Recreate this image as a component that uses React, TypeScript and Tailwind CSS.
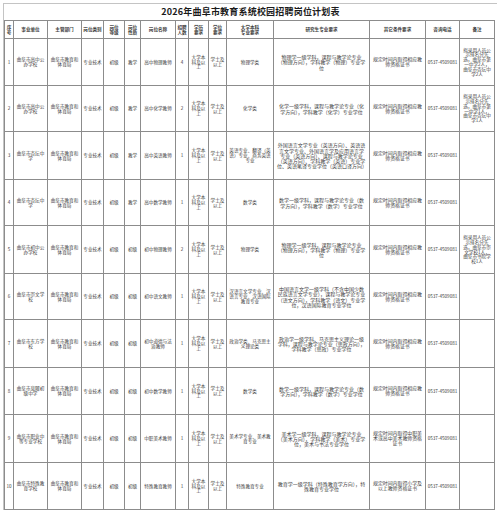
import React from "react";

type Row = {
  no: string;
  unit: string;
  dept: string;
  type: string;
  level: string;
  nature: string;
  name: string;
  num: string;
  edu: string;
  deg: string;
  ug: string;
  pg: string;
  other: string;
  tel: string;
  note: string;
};

const colClasses = [
  "w-[9px]",
  "w-[34px]",
  "w-[34px]",
  "w-[22px]",
  "w-[21px]",
  "w-[16px]",
  "w-[35px]",
  "w-[13px]",
  "w-[20px]",
  "w-[18px]",
  "w-[47px]",
  "w-[96px]",
  "w-[56px]",
  "w-[34px]",
  "w-[35px]",
];

const headers = [
  "序\n号",
  "事业单位",
  "主管部门",
  "岗位类别",
  "岗位\n等级",
  "岗位\n性质",
  "岗位名称",
  "招聘\n人数",
  "学历\n要求",
  "学位\n要求",
  "大学本科\n专业要求",
  "研究生专业要求",
  "其它条件要求",
  "咨询电话",
  "备注",
];

const rowHeights = [
  "h-[47px]",
  "h-[46px]",
  "h-[48px]",
  "h-[46px]",
  "h-[48px]",
  "h-[46px]",
  "h-[48px]",
  "h-[47px]",
  "h-[48px]",
  "h-[47px]",
];

const dept = "曲阜市教育和\n体育局";
const edu = "大学本\n科及以\n上";
const deg = "学士及\n以上";
const tel = "0537-4509081";
const cert = "规定时间内取得相应教\n师资格证书";

const rows: Row[] = [
  {
    no: "1",
    unit: "曲阜市高中公\n办学校",
    dept,
    type: "专业技术",
    level: "初级",
    nature: "教学",
    name: "高中物理教师",
    num: "4",
    edu,
    deg,
    ug: "物理学类",
    pg: "物理学一级学科，课程与教学论专业（物理方向），学科教学（物理）专业学位",
    other: cert,
    tel,
    note: "拟录用人员公\n示排名分先\n选，曲阜市第\n一中学2人，\n曲阜市杏坛中\n学2人",
  },
  {
    no: "2",
    unit: "曲阜市高中公\n办学校",
    dept,
    type: "专业技术",
    level: "初级",
    nature: "教学",
    name: "高中化学教师",
    num: "2",
    edu,
    deg,
    ug: "化学类",
    pg: "化学一级学科，课程与教学论专业（化学方向），学科教学（化学）专业学位",
    other: cert,
    tel,
    note: "拟录用人员公\n示排名分先\n选，曲阜市第\n一中学1人，\n曲阜市杏坛中\n学1人",
  },
  {
    no: "3",
    unit: "曲阜市杏坛中\n学",
    dept,
    type: "专业技术",
    level: "初级",
    nature: "教学",
    name: "高中英语教师",
    num: "1",
    edu,
    deg,
    ug: "英语专业、翻译（英\n语）专业、商务英语\n专业",
    pg: "外国语言文学专业（英语方向）、英语语言文学专业、外国语言学及应用语言学专业（英语方向）、课程与教学论专业（英语方向）、学科教学（英语）专业学位、英语笔译专业学位（英语口译方向）",
    other: cert,
    tel,
    note: "",
  },
  {
    no: "4",
    unit: "曲阜市杏坛中\n学",
    dept,
    type: "专业技术",
    level: "初级",
    nature: "教学",
    name: "高中数学教师",
    num: "1",
    edu,
    deg,
    ug: "数学类",
    pg: "数学一级学科，课程与教学论专业（数学方向），学科教学（数学）专业学位",
    other: cert,
    tel,
    note: "",
  },
  {
    no: "5",
    unit: "曲阜市初中公\n办学校",
    dept,
    type: "专业技术",
    level: "初级",
    nature: "初级",
    name: "初中物理教师",
    num: "2",
    edu,
    deg,
    ug: "物理学类",
    pg: "物理学一级学科，课程与教学论专业（物理方向），学科教学（物理）专业学位",
    other: cert,
    tel,
    note: "拟录用人员公\n示排名分先\n选，曲阜市崇\n文学校1人，\n曲阜市书院学\n校1人",
  },
  {
    no: "6",
    unit: "曲阜市崇文学\n校",
    dept,
    type: "专业技术",
    level: "初级",
    nature: "初级",
    name: "初中语文教师",
    num: "1",
    edu,
    deg,
    ug: "汉语言文学专业、汉\n语言专业、汉语国际\n教育专业",
    pg: "中国语言文学一级学科（不含中国少数民族语言文学专业），课程与教学论专业（语文方向），学科教学（语文）专业学位，汉语国际教育专业学位",
    other: cert,
    tel,
    note: "",
  },
  {
    no: "7",
    unit: "曲阜市东方学\n校",
    dept,
    type: "专业技术",
    level: "初级",
    nature: "初级",
    name: "初中道德与法\n治教师",
    num: "1",
    edu,
    deg,
    ug: "政治学类、马克思主\n义理论类",
    pg: "政治学一级学科、马克思主义理论一级学科，课程与教学论专业（思政方向），学科教学（思政）专业学位",
    other: cert,
    tel,
    note: "",
  },
  {
    no: "8",
    unit: "曲阜市息陬初\n级中学",
    dept,
    type: "专业技术",
    level: "初级",
    nature: "初级",
    name: "初中数学教师",
    num: "1",
    edu,
    deg,
    ug: "数学类",
    pg: "数学一级学科，课程与教学论专业（数学方向），学科教学（数学）专业学位",
    other: cert,
    tel,
    note: "",
  },
  {
    no: "9",
    unit: "曲阜市职业中\n等专业学校",
    dept,
    type: "专业技术",
    level: "初级",
    nature: "初级",
    name: "中职美术教师",
    num: "1",
    edu,
    deg,
    ug: "美术学专业、美术教\n育专业",
    pg: "美术学一级学科，课程与教学论专业（美术方向），学科教学（美术）专业学位，美术与书法专业学位",
    other: "规定时间内取得中职美\n术或高中美术教师资格\n证书",
    tel,
    note: "",
  },
  {
    no: "10",
    unit: "曲阜市特殊教\n育学校",
    dept,
    type: "专业技术",
    level: "初级",
    nature: "初级",
    name: "特殊教育教师",
    num: "1",
    edu,
    deg,
    ug: "特殊教育专业",
    pg: "教育学一级学科（特殊教育学方向），特殊教育专业学位",
    other: "规定时间内取得小学及\n以上教师资格证书",
    tel,
    note: "",
  },
];

const cell =
  "border border-[#8c8c8c] text-center align-middle whitespace-pre-line break-all px-[1px] text-[4.6px] leading-[4.8px] text-[#3c3c3c]";

export default function App() {
  return (
    <div className="w-[500px] h-[510px] bg-white pt-[3px] pl-[3px] font-['Noto_Sans_CJK_SC',sans-serif]">
      <div className="w-[494px] border-t border-l border-[#c4c4c4]">
        <h1 className="h-[16px] flex items-center justify-center text-[9px] font-bold text-[#1a1a1a] tracking-[0.2px]">
          2026年曲阜市教育系统校园招聘岗位计划表
        </h1>
        <table className="table-fixed border-collapse w-[490px]">
          <colgroup>
            {colClasses.map((c, i) => (
              <col key={i} className={c} />
            ))}
          </colgroup>
          <thead>
            <tr className="h-[18px]">
              {headers.map((h, i) => (
                <th key={i} className={`${cell} font-bold`}>
                  {h}
                </th>
              ))}
            </tr>
          </thead>
          <tbody>
            {rows.map((r, i) => (
              <tr key={r.no} className={rowHeights[i]}>
                <td className={cell}>{r.no}</td>
                <td className={cell}>{r.unit}</td>
                <td className={cell}>{r.dept}</td>
                <td className={cell}>{r.type}</td>
                <td className={cell}>{r.level}</td>
                <td className={cell}>{r.nature}</td>
                <td className={cell}>{r.name}</td>
                <td className={cell}>{r.num}</td>
                <td className={cell}>{r.edu}</td>
                <td className={cell}>{r.deg}</td>
                <td className={cell}>{r.ug}</td>
                <td className={`${cell} px-[3px] text-[5px] leading-[5.2px]`}>{r.pg}</td>
                <td className={`${cell} text-[4.9px]`}>{r.other}</td>
                <td className={cell}>{r.tel}</td>
                <td className={cell}>{r.note}</td>
              </tr>
            ))}
          </tbody>
        </table>
      </div>
    </div>
  );
}
